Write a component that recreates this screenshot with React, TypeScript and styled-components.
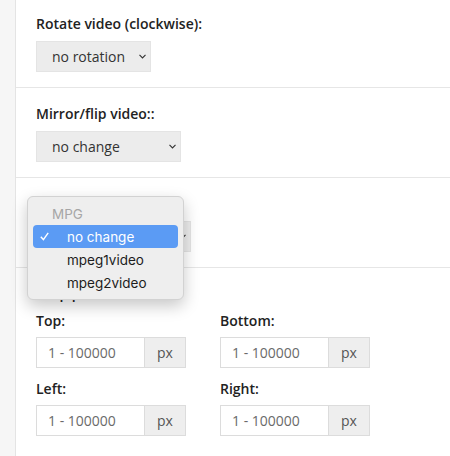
import React from 'react'
import styled, { createGlobalStyle } from 'styled-components'

const GlobalStyle = createGlobalStyle`
    html, body {
        margin: 0;
        padding: 0;
        background: #fff;
    }
    body {
        font-family: "Open Sans", "Liberation Sans", sans-serif;
        color: #222;
    }
`

const Page = styled.div`
    display: flex;
    min-height: 456px;
`

const Gutter = styled.div`
    width: 15px;
    flex-shrink: 0;
    background: #f6f6f6;
    border-right: 1px solid #e4e4e4;
`

const Main = styled.div`
    flex: 1;
    display: flex;
    flex-direction: column;
    position: relative;
`

const Section = styled.div<{ $first?: boolean; $last?: boolean }>`
    padding: ${p => (p.$first ? '14px' : '16px')} 20px 15px;
    border-bottom: ${p => (p.$last ? 'none' : '1px solid #e6e6e6')};
`

const Label = styled.div`
    display: flex;
    align-items: center;
    gap: 6px;
    font-size: 14px;
    line-height: 20px;
    font-weight: 600;
    color: #222;
    margin-bottom: 7px;
`

const FieldLabel = styled(Label)`
    margin-bottom: 6px;
`

const HelpIcon = styled.span`
    display: inline-block;
    width: 12px;
    height: 12px;
    border-radius: 50%;
    background: #3d7fd9;
`

const SelectBox = styled.div<{ $width: number }>`
    display: flex;
    align-items: center;
    width: ${p => p.$width}px;
    height: 31px;
    box-sizing: border-box;
    padding: 0 4px 0 15px;
    background: #ececec;
    border: 1px solid #e4e4e4;
    font-size: 14px;
    color: #333;
`

const Chevron = styled.svg`
    margin-left: auto;
    width: 7px;
    height: 5px;
`

const Grid = styled.div`
    display: grid;
    grid-template-columns: 184px 184px;
    row-gap: 11px;
`

const InputGroup = styled.div`
    display: flex;
    width: 150px;
    height: 31px;
    box-sizing: border-box;
    border: 1px solid #dcdcdc;
`

const Input = styled.div`
    flex: 1;
    display: flex;
    align-items: center;
    padding-left: 11px;
    font-size: 14px;
    color: #6a6a6a;
    background: #fff;
`

const Addon = styled.div`
    width: 40px;
    display: flex;
    align-items: center;
    justify-content: center;
    background: #eeeeee;
    border-left: 1px solid #dcdcdc;
    font-size: 14px;
    color: #555;
`

const Popup = styled.div`
    position: absolute;
    left: 11px;
    top: 196px;
    width: 157px;
    box-sizing: border-box;
    padding: 5px 5px;
    background: #eeeeee;
    border: 1px solid #d2d2d2;
    border-radius: 6px;
    box-shadow: 0 6px 16px rgba(0, 0, 0, 0.22);
    font-family: Inter, "Liberation Sans", sans-serif;
    font-size: 13.5px;
`

const GroupTitle = styled.div`
    height: 23px;
    display: flex;
    align-items: center;
    padding-left: 19px;
    color: #a6a6a6;
`

const Option = styled.div<{ $active?: boolean }>`
    position: relative;
    height: 23px;
    display: flex;
    align-items: center;
    padding-left: 34px;
    border-radius: 4px;
    color: ${p => (p.$active ? '#fff' : '#1d1d1d')};
    background: ${p => (p.$active ? '#5b9bf4' : 'transparent')};
`

const Check = styled.svg`
    position: absolute;
    left: 7px;
    top: 7px;
    width: 9px;
    height: 9px;
`

const Select = ({ value, width }: { value: string; width: number }) => (
    <SelectBox $width={width}>
        {value}
        <Chevron viewBox="0 0 7 5">
            <path d="M0.5 0.8 L3.5 4 L6.5 0.8" fill="none" stroke="#333" strokeWidth="1.1" />
        </Chevron>
    </SelectBox>
)

const CropField = ({ label }: { label: string }) => (
    <div>
        <FieldLabel>{label}</FieldLabel>
        <InputGroup>
            <Input>1 - 100000</Input>
            <Addon>px</Addon>
        </InputGroup>
    </div>
)

const App = () => {
    return (
        <>
            <GlobalStyle />
            <Page>
                <Gutter />
                <Main>
                    <Section $first>
                        <Label>Rotate video (clockwise):</Label>
                        <Select value="no rotation" width={115} />
                    </Section>
                    <Section>
                        <Label>Mirror/flip video::</Label>
                        <Select value="no change" width={145} />
                    </Section>
                    <Section>
                        <Label>Change video codec:</Label>
                        <Select value="no change" width={155} />
                    </Section>
                    <Section $last>
                        <Label>
                            Crop pixels from:
                            <HelpIcon />
                        </Label>
                        <Grid>
                            <CropField label="Top:" />
                            <CropField label="Bottom:" />
                            <CropField label="Left:" />
                            <CropField label="Right:" />
                        </Grid>
                    </Section>

                    <Popup>
                        <GroupTitle>MPG</GroupTitle>
                        <Option $active>
                            <Check viewBox="0 0 9 9">
                                <path d="M0.8 4.8 L3.4 7.6 L8.2 0.8" fill="none" stroke="#fff" strokeWidth="1.4" />
                            </Check>
                            no change
                        </Option>
                        <Option>mpeg1video</Option>
                        <Option>mpeg2video</Option>
                    </Popup>
                </Main>
            </Page>
        </>
    )
}

export default App
